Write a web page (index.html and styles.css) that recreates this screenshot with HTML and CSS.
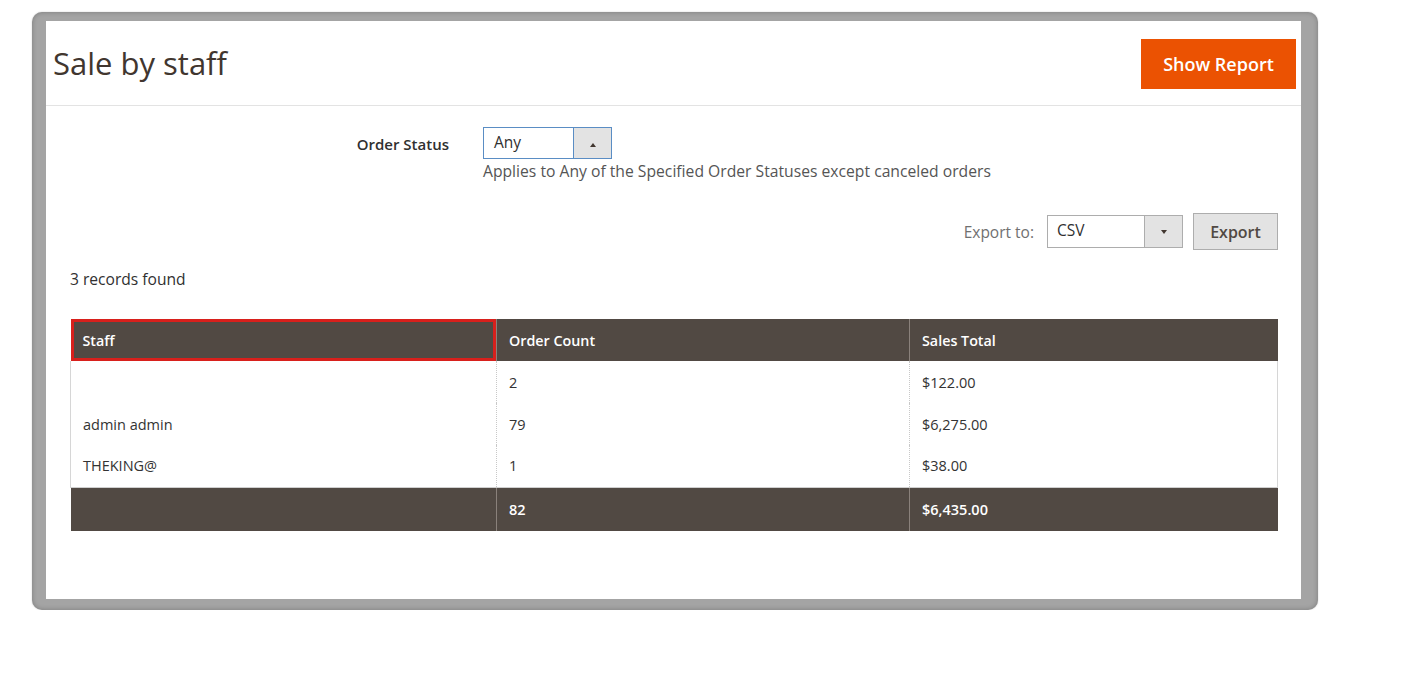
FILE: index.html
```html
<!DOCTYPE html>
<html lang="en">
<head>
<meta charset="utf-8">
<title>Sale by staff</title>
<link rel="stylesheet" href="styles.css">
</head>
<body>
<div class="frame">
  <div class="panel">
    <header class="page-header">
      <h1 class="page-title">Sale by staff</h1>
      <button class="btn-primary" type="button">Show Report</button>
    </header>

    <section class="filters">
      <div class="field">
        <label class="field-label">Order Status</label>
        <div class="field-control">
          <div class="select select-focus">
            <span class="select-value">Any</span>
            <span class="select-arrow"><span class="tri-up"></span></span>
          </div>
          <div class="field-note">Applies to Any of the Specified Order Statuses except canceled orders</div>
        </div>
      </div>
    </section>

    <div class="export-row">
      <span class="export-label">Export to:</span>
      <div class="select select-export">
        <span class="select-value">CSV</span>
        <span class="select-arrow"><span class="tri-down"></span></span>
      </div>
      <button class="btn-secondary" type="button">Export</button>
    </div>

    <div class="records">3 records found</div>

    <table class="grid">
      <colgroup>
        <col class="c1"><col class="c2"><col class="c3">
      </colgroup>
      <thead>
        <tr>
          <th class="th-active">Staff</th>
          <th>Order Count</th>
          <th>Sales Total</th>
        </tr>
      </thead>
      <tbody>
        <tr><td></td><td>2</td><td>$122.00</td></tr>
        <tr><td>admin admin</td><td>79</td><td>$6,275.00</td></tr>
        <tr><td>THEKING@</td><td>1</td><td>$38.00</td></tr>
      </tbody>
      <tfoot>
        <tr><td></td><td>82</td><td>$6,435.00</td></tr>
      </tfoot>
    </table>
  </div>
</div>
</body>
</html>
```
FILE: styles.css
```css
* { box-sizing: border-box; }

html, body {
  margin: 0;
  padding: 0;
  background: #ffffff;
  font-family: "Open Sans", "Noto Sans", sans-serif;
  color: #303030;
}

.frame {
  margin: 12px 0 0 32px;
  width: 1286px;
  height: 598px;
  padding: 9px 17px 11px 14px;
  border-radius: 10px;
  background: #a4a4a4;
  box-shadow: inset 0 0 5px rgba(0, 0, 0, 0.25), 0 0 2px rgba(0, 0, 0, 0.2);
}

.panel {
  width: 100%;
  height: 100%;
  background: #ffffff;
}

.page-header {
  height: 85px;
  display: flex;
  align-items: center;
  justify-content: space-between;
  padding: 0 5px 0 7px;
  border-bottom: 1px solid #e3e3e3;
}

.page-title {
  margin: 0;
  font-size: 31px;
  font-weight: 400;
  color: #41362f;
  line-height: 1;
}

.btn-primary {
  height: 50px;
  width: 155px;
  border: 0;
  background: #eb5202;
  color: #ffffff;
  font-family: inherit;
  font-size: 18px;
  font-weight: 600;
  padding: 0;
  margin-top: 1px;
}

.filters {
  padding-top: 21px;
}

.field {
  display: flex;
  align-items: flex-start;
}

.field-label {
  width: 437px;
  padding-right: 34px;
  text-align: right;
  font-size: 15px;
  font-weight: 600;
  color: #303030;
  line-height: 20px;
  padding-top: 7px;
}

.select {
  display: flex;
  height: 32px;
  border: 1px solid #adadad;
  background: #ffffff;
}

.select-value {
  flex: 1;
  font-size: 15.5px;
  line-height: 28px;
  padding-left: 10px;
  color: #303030;
}

.select-arrow {
  width: 38px;
  background: #e3e3e3;
  border-left: 1px solid #adadad;
  display: flex;
  align-items: center;
  justify-content: center;
}

.select-focus {
  width: 129px;
  border-color: #5a8dc4;
}
.select-focus .select-arrow { border-left-color: #5a8dc4; }

.tri-up {
  width: 0; height: 0;
  border-left: 3px solid transparent;
  border-right: 3px solid transparent;
  border-bottom: 4px solid #41362f;
  margin-top: 3px;
}

.tri-down {
  width: 0; height: 0;
  border-left: 3px solid transparent;
  border-right: 3px solid transparent;
  border-top: 4px solid #41362f;
}

.field-note {
  margin-top: 2px;
  font-size: 15.7px;
  line-height: 21px;
  color: #555555;
}

.export-row {
  margin-top: 31px;
  display: flex;
  align-items: center;
  justify-content: flex-end;
  padding-right: 23px;
}

.export-label {
  font-size: 15.5px;
  color: #707070;
  margin-right: 13px;
}

.select-export {
  width: 136px;
  height: 33px;
}
.select-export .select-value { padding-left: 9px; }

.btn-secondary {
  margin-left: 10px;
  height: 37px;
  width: 85px;
  border: 1px solid #adadad;
  background: #e3e3e3;
  color: #514943;
  font-family: inherit;
  font-size: 16px;
  font-weight: 600;
  padding: 0;
}

.records {
  margin-top: 19px;
  padding-left: 24px;
  font-size: 15.6px;
  line-height: 21px;
  color: #303030;
}

.grid {
  margin: 29px 0 0 24px;
  width: 1207px;
  border-collapse: collapse;
  table-layout: fixed;
  font-size: 14.5px;
}

.c1 { width: 426px; }
.c2 { width: 413px; }
.c3 { width: 368px; }

.grid th {
  height: 42px;
  background: #514943;
  color: #ffffff;
  font-weight: 600;
  font-size: 14.3px;
  text-align: left;
  padding: 0 12px;
  border-left: 1px solid #8a817b;
}
.grid th:first-child { border-left: 0; }

.grid th.th-active {
  box-shadow: inset 0 0 0 3px #d8201c;
}

.grid tbody td {
  height: 42px;
  padding: 0 12px;
  color: #333333;
  border-left: 1px dotted #c8c8c8;
}
.grid tbody td:first-child { border-left: 1px solid #d6d6d6; }
.grid tbody td:last-child { border-right: 1px solid #d6d6d6; }

.grid tfoot td {
  height: 44px;
  padding: 0 12px;
  background: #514943;
  color: #ffffff;
  font-weight: 600;
  border-top: 1px solid #cfcfcf;
  border-left: 1px solid #8a817b;
}
.grid tfoot td:first-child { border-left: 0; }
```
